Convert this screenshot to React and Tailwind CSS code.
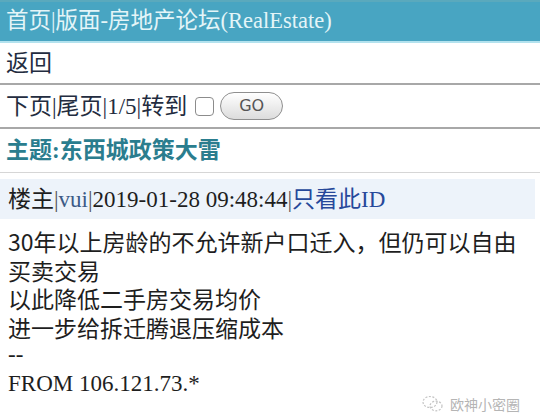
import React from 'react';

const serif = { fontFamily: '"Liberation Serif", "Noto Sans CJK SC", serif' };
const sans = { fontFamily: '"Noto Sans CJK SC", sans-serif' };

function App() {
  return (
    <div
      className="w-[540px] h-[419px] bg-white overflow-hidden relative text-[23px] leading-none"
      style={serif}
    >
      <div className="h-[43px] bg-[#48a5c2] border-b-2 border-[#b3e2ee] border-t-2 border-t-[#5aa9bd] px-[6px] flex items-center text-[22.5px] text-[#e4f5f8]">
        首页|版面-房地产论坛(RealEstate)
      </div>

      <div className="h-[42px] px-[6px] flex items-center border-b-2 border-[#a8a8a8] text-[#232c40]">
        返回
      </div>

      <div className="h-[44px] px-[6px] flex items-center border-b-2 border-[#a8a8a8] text-[#232c40]">
        <span>下页|尾页|1/5|转到</span>
        <span className="ml-[8px] w-[19px] h-[19px] rounded-[4px] border border-[#8c8c8c] bg-white" />
        <span
          className="ml-[6px] w-[63px] h-[28px] rounded-full border border-[#8f8f8f] bg-gradient-to-b from-white to-[#dcdcdc] flex items-center justify-center text-[16px] text-[#555]"
          style={{ fontFamily: '"DejaVu Sans", sans-serif' }}
        >
          GO
        </span>
      </div>

      <div className="h-[44px] px-[6px] flex items-center border-b border-[#d6d6d6] font-bold text-[#2a7d8e]">
        主题:东西城政策大雷
      </div>

      <div className="mt-[6px] mr-[5px] h-[40px] bg-[#edf3fa] px-[8px] flex items-center text-[#1e1e1e]">
        楼主<span className="text-[#555]">|</span>
        <span className="text-[#3b5a86]">vui</span>
        <span className="text-[#555]">|</span>2019-01-28 09:48:44<span className="text-[#555]">|</span>
        <span className="text-[#26489a]">只看此ID</span>
      </div>

      <div className="px-[8px] pt-[8px] text-[#1e1e1e] leading-[28.5px]">
        <div style={sans}>30年以上房龄的不允许新户口迁入，但仍可以自由买卖交易</div>
        <div style={sans}>以此降低二手房交易均价</div>
        <div style={sans}>进一步给拆迁腾退压缩成本</div>
        <div>--</div>
        <div>FROM 106.121.73.*</div>
      </div>

      <div className="absolute right-[20px] bottom-[6px] flex items-center gap-[6px] text-[#b5b5b5] text-[14px]">
        <svg width="22" height="18" viewBox="0 0 22 18" fill="none" stroke="#c4c4c4" strokeWidth="1.2" strokeDasharray="2 1.5">
          <ellipse cx="8" cy="7" rx="7" ry="5.5" />
          <ellipse cx="14" cy="11" rx="6" ry="4.8" />
        </svg>
        <span style={sans}>欧神小密圈</span>
      </div>
    </div>
  );
}

export default App;
